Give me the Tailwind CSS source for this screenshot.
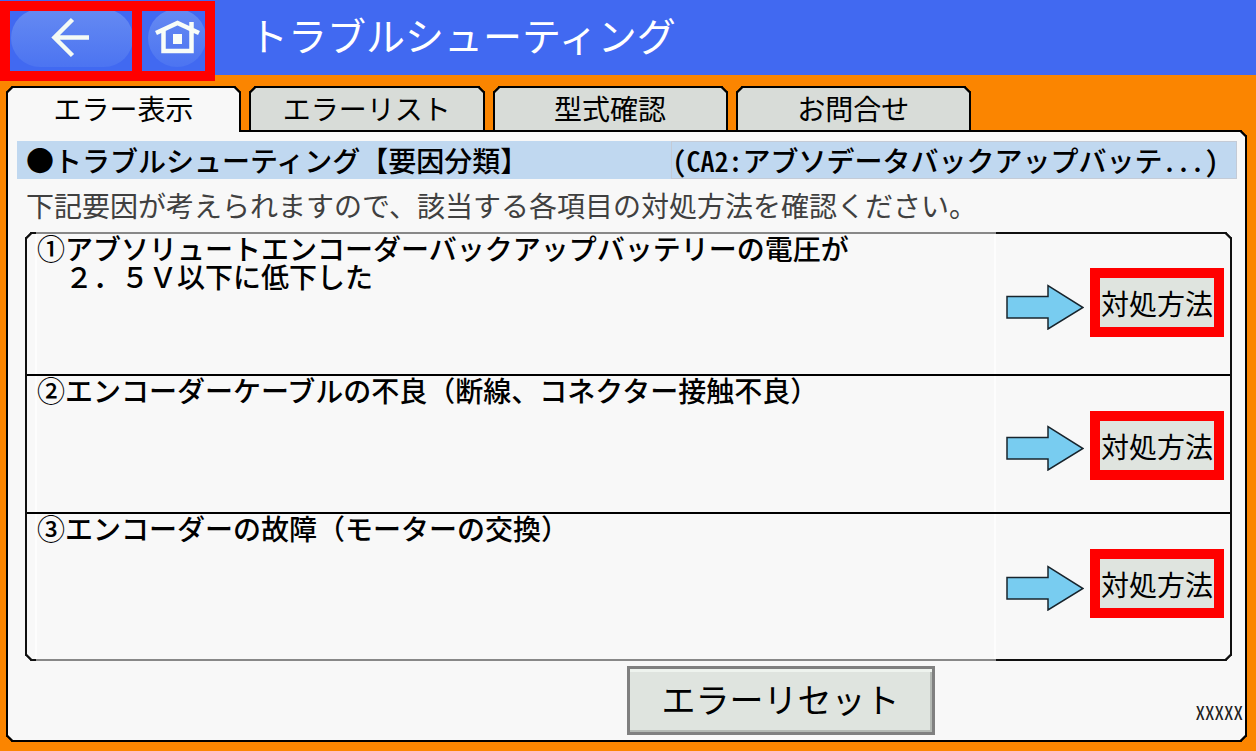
<!DOCTYPE html>
<html lang="ja">
  <head>
    <meta charset="UTF-8" />
    <meta name="viewport" content="width=device-width, initial-scale=1.0" />
    <title>トラブルシューティング</title>
    <script src="https://cdn.jsdelivr.net/npm/@tailwindcss/browser@4"></script>
  </head>
  <body
    class="flex flex-col min-h-screen bg-[#fb8500] text-black text-[28px] leading-7 font-['Noto_Sans_CJK_JP',sans-serif]"
  >
    <header class="flex items-start h-[75px] pt-px bg-[#4169f1]">
      <nav class="relative flex shrink-0">
        <button type="button" aria-label="戻る" class="border-10 border-[#ff0000]">
          <svg class="block w-[122px] h-[60px]" viewBox="0 0 122 60" fill="none">
            <defs>
              <linearGradient id="shine" x1="0" y1="0" x2="0" y2="1">
                <stop offset="0" stop-color="#658af2" />
                <stop offset="1" stop-color="#4c74f1" />
              </linearGradient>
            </defs>
            <rect x="1" y="-2" width="122" height="58" rx="29" fill="url(#shine)" />
            <path d="M62.500 8.500L44.500 26.500L62.500 44.500M45 26.500H79" stroke="#f4faf5" stroke-width="4.500" />
          </svg>
        </button>
        <button type="button" aria-label="ホーム" class="border-10 border-l-0 border-[#ff0000]">
          <svg class="block w-[63px] h-[60px]" viewBox="0 0 63 60" fill="none">
            <circle cx="35" cy="27" r="29" fill="url(#shine)" />
            <path
              d="M14 22L35.500 12L57 22M49.500 11V19M21.500 19V40H49.500V19"
              stroke="#f8fdf8"
              stroke-width="4.500"
            />
            <rect x="31" y="23" width="9" height="10" fill="#f8fdf8" />
          </svg>
        </button>
      </nav>
      <h1 class="pl-[34px] pt-1.5 text-[39px] leading-[54px] text-white whitespace-nowrap">トラブルシューティング</h1>
    </header>

    <main class="flex flex-col grow pl-1.5 pr-[9px] pt-[11px] pb-[9px]">
      <!-- tabs overlap the panel's top border -->
      <nav class="relative grid grid-cols-4 gap-2 w-full max-w-[965px] h-[46px] -mb-0.5">
        <button type="button" class="border-2 border-b-0 border-black rounded-t-[6px] [corner-shape:bevel] bg-[#f8f8f8] pb-1 whitespace-nowrap">エラー表示</button>
        <button type="button" class="border-2 border-black rounded-t-[6px] [corner-shape:bevel] bg-[#d8dcd8] pb-0.5 whitespace-nowrap">エラーリスト</button>
        <button type="button" class="border-2 border-black rounded-t-[6px] [corner-shape:bevel] bg-[#d8dcd8] pb-0.5 whitespace-nowrap">型式確認</button>
        <button type="button" class="border-2 border-black rounded-t-[6px] [corner-shape:bevel] bg-[#d8dcd8] pb-0.5 whitespace-nowrap">お問合せ</button>
      </nav>

      <section class="flex flex-col grow border-2 border-black rounded-[6px] rounded-tl-none [corner-shape:bevel] bg-[#f8f8f8] pt-[9px]">
        <div class="grid grid-cols-[655fr_566fr] ml-[9px] mr-2 bg-[#c0d8f0] font-medium">
          <h2 class="pl-[9px] py-[5px] whitespace-nowrap">●トラブルシューティング【要因分類】</h2>
          <p class="border border-[#c4cbd6] py-1 whitespace-nowrap"><span class="[font-feature-settings:'hwid']">(CA2:</span>アブソデータバックアップバッテ<span class="[font-feature-settings:'hwid']">...)</span></p>
        </div>

        <p class="pl-[18px] pt-3 pb-[13px] text-[#404040]">下記要因が考えられますので、該当する各項目の対処方法を確認ください。</p>

        <ol class="relative ml-[17px] mr-[13px] border-2 border-[#101010] rounded-[6px] [corner-shape:bevel]">
          <li class="flex min-h-[142px] border-b-2 border-black">
            <p class="grow ml-2 border-x-2 border-[#fdfdfd] font-medium">①アブソリュートエンコーダーバックアップバッテリーの電圧が<br />　２．５Ｖ以下に低下した</p>
            <div class="flex items-start shrink-0 gap-1.5 pl-2.5 pr-1.5 pt-[34px]">
              <svg class="w-[78px] h-[46px] mt-4" viewBox="0 0 78 46" fill="#78ccf0" stroke="#18242c" stroke-width="1.500">
                <path d="M1 12.500H42V1.500L77 23.500L42 45V34H1Z" />
              </svg>
              <button type="button" class="w-[134px] h-[69px] border-10 border-[#ff0000] bg-[#dfe4df] whitespace-nowrap">対処方法</button>
            </div>
          </li>
          <li class="flex min-h-[138px] border-b-2 border-black">
            <p class="grow ml-2 border-x-2 border-[#fdfdfd] font-medium">②エンコーダーケーブルの不良（断線、コネクター接触不良）</p>
            <div class="flex items-start shrink-0 gap-1.5 pl-2.5 pr-1.5 pt-[35px]">
              <svg class="w-[78px] h-[46px] mt-3.5" viewBox="0 0 78 46" fill="#78ccf0" stroke="#18242c" stroke-width="1.500">
                <path d="M1 12.500H42V1.500L77 23.500L42 45V34H1Z" />
              </svg>
              <button type="button" class="w-[134px] h-[69px] border-10 border-[#ff0000] bg-[#dfe4df] whitespace-nowrap">対処方法</button>
            </div>
          </li>
          <li class="flex min-h-[145px]">
            <p class="grow ml-2 border-x-2 border-[#fdfdfd] font-medium">③エンコーダーの故障（モーターの交換）</p>
            <div class="flex items-start shrink-0 gap-1.5 pl-2.5 pr-1.5 pt-[35px]">
              <svg class="w-[78px] h-[46px] mt-4" viewBox="0 0 78 46" fill="#78ccf0" stroke="#18242c" stroke-width="1.500">
                <path d="M1 12.500H42V1.500L77 23.500L42 45V34H1Z" />
              </svg>
              <button type="button" class="w-[134px] h-[69px] border-10 border-[#ff0000] bg-[#dfe4df] whitespace-nowrap">対処方法</button>
            </div>
          </li>
          <!-- lighter stretch of the frame above and below the text column -->
          <li aria-hidden="true" class="absolute -inset-y-0.5 left-[9px] right-[234px] border-y-2 border-[#888888] pointer-events-none"></li>
        </ol>

        <div class="grid grid-cols-2 pt-[5px]">
          <div class="col-start-2 flex items-start justify-between">
            <button
              type="button"
              class="w-[308px] h-[69px] border-3 border-[#808080] bg-[#dfe4df] shadow-[inset_0_3px_0_#eef3ee,inset_-2px_-2px_0_#b4b9b4] pb-1 text-[34px] leading-[40px] whitespace-nowrap"
            >エラーリセット</button>
            <span class="mt-8 mr-0.5 text-[19px] text-[#202020] [font-feature-settings:'hwid']">XXXXX</span>
          </div>
        </div>
      </section>
    </main>
  </body>
</html>
